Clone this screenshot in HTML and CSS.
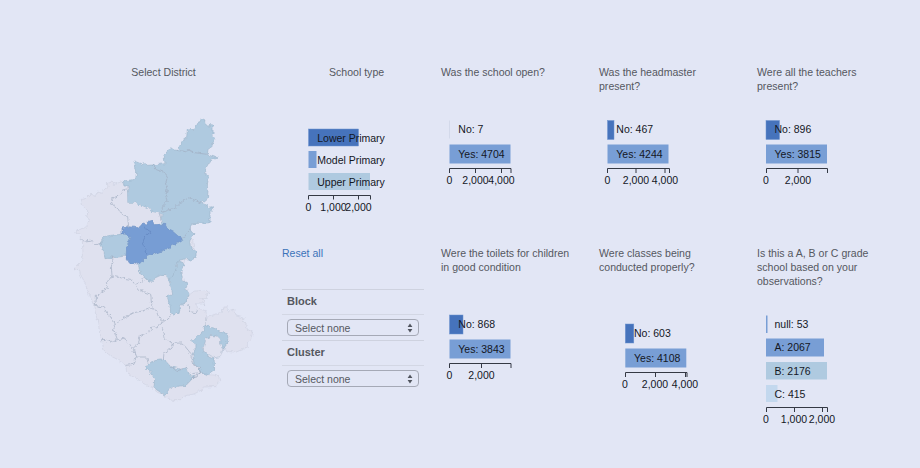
FILE: index.html
```html
<!DOCTYPE html>
<html lang="en">
<head>
<meta charset="utf-8">
<title>School survey</title>
<link rel="stylesheet" href="styles.css">
</head>
<body>
<main class="dashboard">
  <section class="map-panel">
    <h2 class="title">Select District</h2>
    <svg class="map" viewBox="0 0 570 900" width="190" height="300">
      <defs>
        <filter id="rough" x="-5%" y="-5%" width="110%" height="110%">
          <feTurbulence type="fractalNoise" baseFrequency="0.09" numOctaves="2" seed="4"/>
          <feDisplacementMap in="SourceGraphic" scale="14" xChannelSelector="R" yChannelSelector="G"/>
        </filter>
      </defs>
      <g filter="url(#rough)" transform="translate(2 3)">
        <path class="state" d="M160 235L150 228 130 235 125 228 110 232 112 243 100 250 92 262 80 258 75 268 60 265 48 277 32 280 38 305 48 308 55 318 45 328 56 340 47 364 25 370 12 380 30 388 28 400 35 405 37 440 32 455 35 462 25 474 10 488 27 492 29 504 40 525 68 596 78 635 92 700 100 733 120 750 140 760 165 778 168 797 180 808 205 823 230 840 248 845 258 858 280 867 290 875 305 884 330 884 342 870 370 864 395 851 398 843 435 842 447 825 445 812 430 807 405 806 430 792 431 755 450 750 458 728 475 737 500 738 530 725 530 708 540 700 546 678 530 670 525 652 518 648 520 636 497 630 490 610 472 615 468 602 456 606 455 620 440 622 408 634 406 615 380 605 378 592 400 590 405 600 402 585 390 578 410 578 405 568 418 562 405 552 375 555 355 570 333 495 340 465 376 455 358 367 270 322Z"/>
        <path class="light" d="M395 38L403 42 402 52 413 62 414 55 427 57 427 88 435 97 426 108 425 121 412 130 410 146 440 156 418 165 402 192 402 200 413 208 410 240 412 255 410 277 393 292 410 298 413 305 428 302 418 320 418 350 366 353 358 367 361 377 370 383 357 405 359 416 367 430 376 436 376 455 360 463 340 459 325 463 317 473 319 485 300 520 286 509 270 508 250 517 250 526 235 525 207 498 204 475 205 462 168 450 135 454 103 458 100 437 87 415 100 392 120 388 154 385 175 365 270 350 274 325 260 322 245 318 235 308 190 290 173 290 173 262 175 240 160 240 158 225 195 220 198 195 190 165 215 175 222 170 230 178 245 177 283 173 280 148 300 125 310 132 320 133 335 105 348 95 350 72 372 70 385 45Z"/>
        <path class="land" d="M173 290L190 290 235 308 245 318 270 323 273 352 248 356 247 343 233 345 233 355 217 351 205 365 174 364 171 332 154 326 140 306 125 295 120 280 145 268 155 252 172 248Z"/>
        <path class="light" d="M322 464L340 471 339 483 333 497 335 523 350 532 345 548 355 563 350 585 330 598 325 620 312 627 300 620 298 600 290 572 306 565 302 545 294 525 319 484Z"/>
        <path class="light" d="M403 655L418 664 440 670 446 678 470 683 472 698 460 730 450 715 450 700 440 690 420 689 405 699 402 720 397 733 408 742 414 753 430 760 432 790 410 806 390 800 385 785 370 775 366 742 376 722 366 704 380 689 398 681Z"/>
        <path class="light" d="M229 778L250 762 268 759 280 760 300 782 320 787 332 792 348 784 356 808 372 811 346 838 330 840 300 844 282 867 250 846 252 820 239 797 228 788Z"/>
        <path class="mid" d="M154 366L170 362 205 365 217 351 233 355 233 345 247 343 248 356 285 355 292 370 305 375 335 401 297 425 265 438 227 452 205 475 190 470 177 472 166 456 168 425 180 394 170 385 154 384Z"/>
        <path class="hole" d="M405 700L420 689 440 690 450 700 449 717 457 727 450 752 430 755 410 742 397 729Z"/>
        <g class="borders">
          <path d="M320 133L345 137 360 132 370 140 410 145"/>
          <path d="M245 177L257 191 280 199 290 214 284 235 290 250 284 270 290 285 272 304 276 319 313 305 325 292 355 275 393 292"/>
          <path d="M173 248L155 252 145 268 120 280 125 295 140 306 154 326 171 332 174 366"/>
          <path d="M267 322L273 352M335 401L360 367M28 400L40 405 60 403 80 417 92 410"/>
          <path class="inner" d="M221 359L223 368 240 373 237 380 225 390 217 405 222 425 231 447"/>
          <path d="M123 450L130 462 122 480 124 510 160 517 180 520 193 535 215 527 220 514"/>
          <path d="M124 510L107 530 113 545 90 560 77 568 77 585 70 597 100 604 110 620 125 640 134 658 129 670 140 700 125 710 100 700 92 701"/>
          <path d="M193 535L200 550 240 565 244 605 215 615 190 620 145 645 134 658M244 605L258 615 265 633 281 646 302 627"/>
          <path d="M281 646L260 662 242 664 241 675 208 689 204 712 187 727 170 714 162 696 140 702"/>
          <path d="M187 727L196 753 190 775 165 778M196 753L227 753 232 770M275 664L281 700 309 712 303 725 280 742 278 760"/>
          <path d="M309 712L335 711 360 742 366 745M300 782L318 794 348 784M360 747L366 775 386 787 390 800 362 803"/>
          <path d="M352 597L360 618 378 620 381 606M403 634L403 655M390 800L375 813 360 817"/>
        </g>
      </g>
    </svg>
  </section>

  <section class="charts">
    <article class="panel">
      <h2 class="title shifted">School type</h2>
      <svg class="chart" width="142" height="138">
        <rect class="b1" x="26.5" y="22" width="50" height="17"/>
        <rect class="b2" x="26.5" y="44" width="8" height="17"/>
        <rect class="b3" x="26.5" y="66" width="61.5" height="17"/>
        <path class="axis" d="M26.5 92.5V88.5H88.5V92.5M51.5 88.5V92.5M76.5 88.5V92.5"/>
        <g class="labels"><text x="35.3" y="35" textLength="67.5">Lower Primary</text><text x="35.3" y="57" textLength="67.5">Model Primary</text><text x="35.3" y="79" textLength="67.5">Upper Primary</text></g>
        <g class="ticks"><text x="26.5" y="103.5">0</text><text x="51.5" y="103.5">1,000</text><text x="76.5" y="103.5">2,000</text></g>
      </svg>
    </article>
    <article class="panel">
      <h2 class="title">Was the school open?</h2>
      <svg class="chart" width="142" height="138">
        <rect class="faint" x="8" y="13.5" width="1" height="18"/>
        <rect class="b2" x="8.5" y="37.5" width="61" height="19"/>
        <path class="axis" d="M8.5 66V61.5H70V66M34.5 61.5V66M60.5 61.5V66"/>
        <g class="labels"><text x="17.3" y="26">No: 7</text><text x="17.3" y="50.5">Yes: 4704</text></g>
        <g class="ticks"><text x="8.5" y="77">0</text><text x="34.5" y="77">2,000</text><text x="60.5" y="77">4,000</text></g>
      </svg>
    </article>
    <article class="panel">
      <h2 class="title">Was the headmaster present?</h2>
      <svg class="chart" width="142" height="138">
        <rect class="b1" x="8.5" y="13.5" width="6.5" height="19"/>
        <rect class="b2" x="8.5" y="37.5" width="61" height="19"/>
        <path class="axis" d="M8.5 66V61.5H70.5V66M37 61.5V66M66 61.5V66"/>
        <g class="labels"><text x="17.3" y="26">No: 467</text><text x="17.3" y="50.5">Yes: 4244</text></g>
        <g class="ticks"><text x="8.5" y="77">0</text><text x="37" y="77">2,000</text><text x="66" y="77">4,000</text></g>
      </svg>
    </article>
    <article class="panel">
      <h2 class="title">Were all the teachers present?</h2>
      <svg class="chart" width="142" height="138">
        <rect class="b1" x="9" y="13.5" width="13.5" height="19"/>
        <rect class="b2" x="9" y="37.5" width="61" height="19"/>
        <path class="axis" d="M9.5 66V61.5H70.5V66M41 61.5V66"/>
        <g class="labels"><text x="17.5" y="26">No: 896</text><text x="17.5" y="50.5">Yes: 3815</text></g>
        <g class="ticks"><text x="9" y="77">0</text><text x="41" y="77">2,000</text></g>
      </svg>
    </article>

    <article class="panel">
      <a class="title reset">Reset all</a>
      <div class="filters">
        <div class="filter-name">Block</div>
        <div class="filter-field"><div class="select"><span>Select none</span><svg width="6" height="10" viewBox="0 0 6 10"><path d="M3 .4L5.4 4H.6ZM3 9.6L.6 6H5.4Z"/></svg></div></div>
        <div class="filter-name">Cluster</div>
        <div class="filter-field"><div class="select"><span>Select none</span><svg width="6" height="10" viewBox="0 0 6 10"><path d="M3 .4L5.4 4H.6ZM3 9.6L.6 6H5.4Z"/></svg></div></div>
      </div>
    </article>
    <article class="panel">
      <h2 class="title">Were the toilets for children in good condition</h2>
      <svg class="chart" width="142" height="138">
        <rect class="b1" x="8.5" y="27" width="13.5" height="19"/>
        <rect class="b2" x="8.5" y="51.5" width="61" height="19"/>
        <path class="axis" d="M8.5 80V75.5H70V80M40.5 75.5V80"/>
        <g class="labels"><text x="17.3" y="40">No: 868</text><text x="17.3" y="64.5">Yes: 3843</text></g>
        <g class="ticks"><text x="8.5" y="91">0</text><text x="40.5" y="91">2,000</text></g>
      </svg>
    </article>
    <article class="panel">
      <h2 class="title">Were classes being conducted properly?</h2>
      <svg class="chart" width="142" height="138">
        <rect class="b1" x="26.3" y="36" width="8.5" height="19"/>
        <rect class="b2" x="26.3" y="60.5" width="61" height="19"/>
        <path class="axis" d="M26.5 89V84.5H88V89M56.5 84.5V89M86.5 84.5V89"/>
        <g class="labels"><text x="35" y="49">No: 603</text><text x="35" y="73.5">Yes: 4108</text></g>
        <g class="ticks"><text x="26" y="100">0</text><text x="56" y="100">2,000</text><text x="86" y="100">4,000</text></g>
      </svg>
    </article>
    <article class="panel">
      <h2 class="title">Is this a A, B or C grade school based on your observations?</h2>
      <svg class="chart" width="142" height="138">
        <rect class="b2" x="9" y="27.5" width="1.5" height="17.5"/>
        <rect class="b2" x="9" y="50.5" width="58" height="18"/>
        <rect class="b3" x="9" y="74" width="61" height="17.5"/>
        <rect class="b4" x="9" y="97" width="11.5" height="17"/>
        <path class="axis" d="M9.5 124V119.5H70.5V124M37.5 119.5V124M65.5 119.5V124"/>
        <g class="labels"><text x="17.5" y="40">null: 53</text><text x="17.5" y="63">A: 2067</text><text x="17.5" y="86.5">B: 2176</text><text x="17.5" y="109.5">C: 415</text></g>
        <g class="ticks"><text x="9" y="135">0</text><text x="37" y="135">1,000</text><text x="65" y="135">2,000</text></g>
      </svg>
    </article>
  </section>
</main>
</body>
</html>
```
FILE: styles.css
```css
* { box-sizing: border-box; }
body {
  margin: 0;
  background: #e2e6f5;
  color: #55585f;
  font-family: "Liberation Sans", Arial, sans-serif;
  font-size: 10.5px;
}
.dashboard {
  display: grid;
  grid-template-columns: 185px 1fr;
  column-gap: 27px;
  height: 468px;
  padding: 65px 0 0 70px;
}
.title {
  display: block;
  margin: 0;
  height: 42px;
  width: 132px;
  font-size: 10.55px;
  font-weight: 400;
  line-height: 14px;
}
.map-panel .title { width: 187px; height: 40px; text-align: center; }
.map { display: block; overflow: visible; }
.state, .hole { fill: #dfe1ef; stroke: #c9cddd; stroke-width: 1.5; }
.land { fill: #dfe1ef; }
.light { fill: #afcae0; stroke: #9eb6cc; stroke-width: 2; }
.mid { fill: #779dd4; stroke: #7394c6; stroke-width: 2; }
.hole { stroke: #a9b9cc; }
.borders { fill: none; stroke: #a0acc0; stroke-opacity: .65; stroke-width: 3; stroke-linejoin: round; }
.borders .inner { stroke: #5f83bd; }
.charts {
  display: grid;
  grid-template-columns: 159px 158px 158px 158px;
  grid-template-rows: 181px 1fr;
}
.shifted { padding-left: 47px; }
.chart { display: block; overflow: visible; }
.b1 { fill: #4673bc; stroke: #6e94d0; stroke-width: .5; }
.b2 { fill: #789ed5; }
.b3 { fill: #afcae0; }
.b4 { fill: #c3d8ee; }
.faint { fill: #d3d9ea; }
.axis { fill: none; stroke: #343944; stroke-width: 1; }
.labels, .ticks { font-size: 10.5px; fill: #14171f; }
.ticks { text-anchor: middle; }
.reset { color: #3b73b9; }
.filters { width: 142px; padding-top: 1px; }
.filter-name {
  height: 25px;
  padding-left: 5px;
  border-top: 1px solid #ced2df;
  font-size: 11px;
  font-weight: 700;
  line-height: 23px;
}
.filter-field {
  height: 26px;
  padding: 4px 5px;
  border-top: 1px solid #d3d7e4;
}
.select {
  display: flex;
  align-items: center;
  justify-content: space-between;
  height: 17px;
  padding: 0 5px 0 7px;
  border: 1px solid #a5a9b6;
  border-radius: 4px;
}
.select svg { fill: #50545e; }
```
